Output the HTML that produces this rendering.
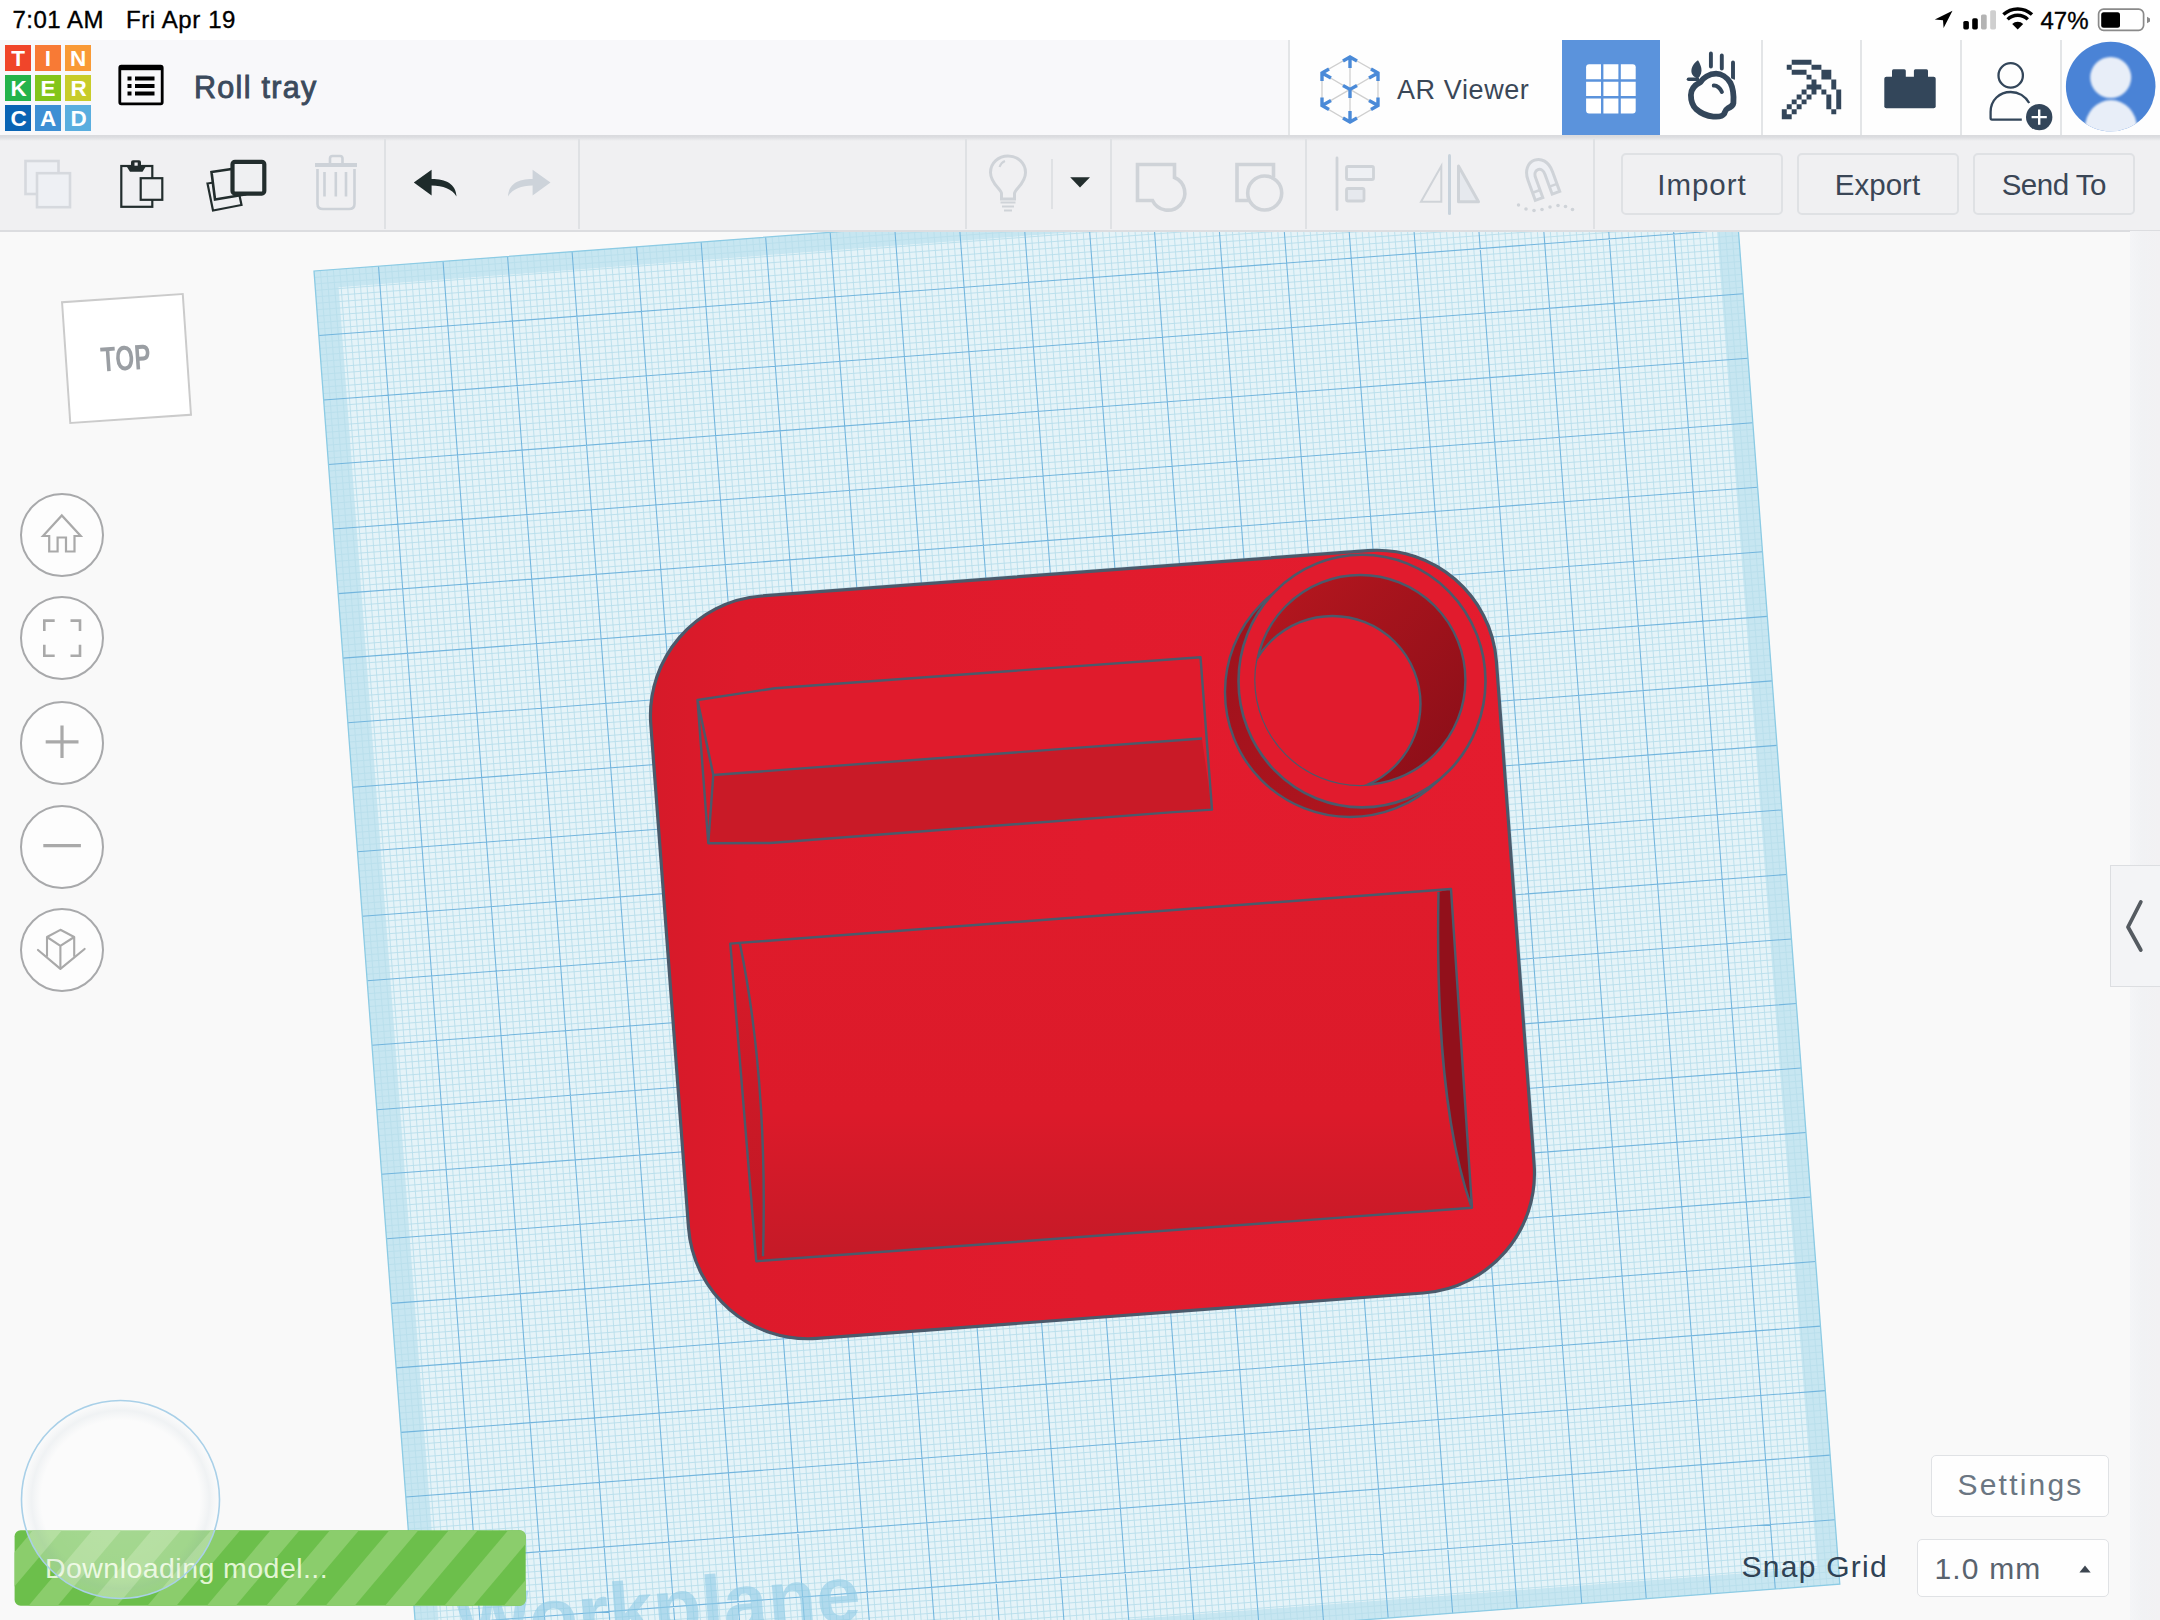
<!DOCTYPE html>
<html><head><meta charset="utf-8">
<style>
*{box-sizing:border-box}
html,body{margin:0;padding:0}
body{width:2160px;height:1620px;overflow:hidden;position:relative;background:#f9f9f9;font-family:"Liberation Sans",sans-serif;}
.abs{position:absolute}
.txt{white-space:nowrap;line-height:1}
#status{left:0;top:0;width:2160px;height:40px;background:#fff}
#header{left:0;top:40px;width:2160px;height:97px;background:#f6f7f8;border-bottom:2px solid #dcdfe2}
#toolbar{left:0;top:137px;width:2160px;height:94px;background:#eff0f2;border-bottom:2px solid #dfe1e4}
.sep{position:absolute;width:2px;background:#dcdfe2}
.btn{position:absolute;top:153px;height:62px;background:#f0f0f2;border:2px solid #dfe1e4;border-radius:5px;color:#3a4656;font-size:29.5px;text-align:center;line-height:59px;letter-spacing:0.6px;white-space:nowrap}
.circ{position:absolute;left:20px;width:84px;height:84px;border-radius:50%;border:2px solid #a8a9ab;background:#fdfdfd}
</style></head><body>
<svg class="abs" style="left:0;top:0" width="2160" height="1620" viewBox="0 0 2160 1620">
<defs>
<linearGradient id="bodyg" x1="0" y1="0" x2="1" y2="0"><stop offset="0" stop-color="#d61a29"/><stop offset="0.1" stop-color="#dd1a2b"/><stop offset="0.5" stop-color="#e11b2d"/><stop offset="1" stop-color="#e41c2e"/></linearGradient>
<linearGradient id="crescg" x1="0" y1="0" x2="1" y2="1"><stop offset="0" stop-color="#9c111c"/><stop offset="1" stop-color="#b5161f"/></linearGradient>
<linearGradient id="cupg" x1="0" y1="0" x2="1" y2="1"><stop offset="0" stop-color="#b8171f"/><stop offset="1" stop-color="#880e18"/></linearGradient>
<linearGradient id="lwg" x1="0" y1="0" x2="0" y2="1"><stop offset="0" stop-color="#d81a29"/><stop offset="1" stop-color="#bf1824"/></linearGradient>
<linearGradient id="trayg" x1="0" y1="0" x2="0" y2="1"><stop offset="0" stop-color="#df1b2b"/><stop offset="0.6" stop-color="#dc1a2a"/><stop offset="1" stop-color="#c41a27"/></linearGradient>
</defs>
<g transform="translate(314 271) rotate(-4.2827) scale(6.47032)">
<rect x="0" y="0" width="220" height="220" fill="#e5f3f8"/>
<path fill-rule="evenodd" fill="#c7e6f1" d="M0 0H220V220H0Z M3.6 2.8V217.2H216.7V2.8Z"/>
<path d="M1 0V220M0 1H220M2 0V220M0 2H220M3 0V220M0 3H220M4 0V220M0 4H220M5 0V220M0 5H220M6 0V220M0 6H220M7 0V220M0 7H220M8 0V220M0 8H220M9 0V220M0 9H220M11 0V220M0 11H220M12 0V220M0 12H220M13 0V220M0 13H220M14 0V220M0 14H220M15 0V220M0 15H220M16 0V220M0 16H220M17 0V220M0 17H220M18 0V220M0 18H220M19 0V220M0 19H220M21 0V220M0 21H220M22 0V220M0 22H220M23 0V220M0 23H220M24 0V220M0 24H220M25 0V220M0 25H220M26 0V220M0 26H220M27 0V220M0 27H220M28 0V220M0 28H220M29 0V220M0 29H220M31 0V220M0 31H220M32 0V220M0 32H220M33 0V220M0 33H220M34 0V220M0 34H220M35 0V220M0 35H220M36 0V220M0 36H220M37 0V220M0 37H220M38 0V220M0 38H220M39 0V220M0 39H220M41 0V220M0 41H220M42 0V220M0 42H220M43 0V220M0 43H220M44 0V220M0 44H220M45 0V220M0 45H220M46 0V220M0 46H220M47 0V220M0 47H220M48 0V220M0 48H220M49 0V220M0 49H220M51 0V220M0 51H220M52 0V220M0 52H220M53 0V220M0 53H220M54 0V220M0 54H220M55 0V220M0 55H220M56 0V220M0 56H220M57 0V220M0 57H220M58 0V220M0 58H220M59 0V220M0 59H220M61 0V220M0 61H220M62 0V220M0 62H220M63 0V220M0 63H220M64 0V220M0 64H220M65 0V220M0 65H220M66 0V220M0 66H220M67 0V220M0 67H220M68 0V220M0 68H220M69 0V220M0 69H220M71 0V220M0 71H220M72 0V220M0 72H220M73 0V220M0 73H220M74 0V220M0 74H220M75 0V220M0 75H220M76 0V220M0 76H220M77 0V220M0 77H220M78 0V220M0 78H220M79 0V220M0 79H220M81 0V220M0 81H220M82 0V220M0 82H220M83 0V220M0 83H220M84 0V220M0 84H220M85 0V220M0 85H220M86 0V220M0 86H220M87 0V220M0 87H220M88 0V220M0 88H220M89 0V220M0 89H220M91 0V220M0 91H220M92 0V220M0 92H220M93 0V220M0 93H220M94 0V220M0 94H220M95 0V220M0 95H220M96 0V220M0 96H220M97 0V220M0 97H220M98 0V220M0 98H220M99 0V220M0 99H220M101 0V220M0 101H220M102 0V220M0 102H220M103 0V220M0 103H220M104 0V220M0 104H220M105 0V220M0 105H220M106 0V220M0 106H220M107 0V220M0 107H220M108 0V220M0 108H220M109 0V220M0 109H220M111 0V220M0 111H220M112 0V220M0 112H220M113 0V220M0 113H220M114 0V220M0 114H220M115 0V220M0 115H220M116 0V220M0 116H220M117 0V220M0 117H220M118 0V220M0 118H220M119 0V220M0 119H220M121 0V220M0 121H220M122 0V220M0 122H220M123 0V220M0 123H220M124 0V220M0 124H220M125 0V220M0 125H220M126 0V220M0 126H220M127 0V220M0 127H220M128 0V220M0 128H220M129 0V220M0 129H220M131 0V220M0 131H220M132 0V220M0 132H220M133 0V220M0 133H220M134 0V220M0 134H220M135 0V220M0 135H220M136 0V220M0 136H220M137 0V220M0 137H220M138 0V220M0 138H220M139 0V220M0 139H220M141 0V220M0 141H220M142 0V220M0 142H220M143 0V220M0 143H220M144 0V220M0 144H220M145 0V220M0 145H220M146 0V220M0 146H220M147 0V220M0 147H220M148 0V220M0 148H220M149 0V220M0 149H220M151 0V220M0 151H220M152 0V220M0 152H220M153 0V220M0 153H220M154 0V220M0 154H220M155 0V220M0 155H220M156 0V220M0 156H220M157 0V220M0 157H220M158 0V220M0 158H220M159 0V220M0 159H220M161 0V220M0 161H220M162 0V220M0 162H220M163 0V220M0 163H220M164 0V220M0 164H220M165 0V220M0 165H220M166 0V220M0 166H220M167 0V220M0 167H220M168 0V220M0 168H220M169 0V220M0 169H220M171 0V220M0 171H220M172 0V220M0 172H220M173 0V220M0 173H220M174 0V220M0 174H220M175 0V220M0 175H220M176 0V220M0 176H220M177 0V220M0 177H220M178 0V220M0 178H220M179 0V220M0 179H220M181 0V220M0 181H220M182 0V220M0 182H220M183 0V220M0 183H220M184 0V220M0 184H220M185 0V220M0 185H220M186 0V220M0 186H220M187 0V220M0 187H220M188 0V220M0 188H220M189 0V220M0 189H220M191 0V220M0 191H220M192 0V220M0 192H220M193 0V220M0 193H220M194 0V220M0 194H220M195 0V220M0 195H220M196 0V220M0 196H220M197 0V220M0 197H220M198 0V220M0 198H220M199 0V220M0 199H220M201 0V220M0 201H220M202 0V220M0 202H220M203 0V220M0 203H220M204 0V220M0 204H220M205 0V220M0 205H220M206 0V220M0 206H220M207 0V220M0 207H220M208 0V220M0 208H220M209 0V220M0 209H220M211 0V220M0 211H220M212 0V220M0 212H220M213 0V220M0 213H220M214 0V220M0 214H220M215 0V220M0 215H220M216 0V220M0 216H220M217 0V220M0 217H220M218 0V220M0 218H220M219 0V220M0 219H220" stroke="#b9dfec" stroke-width="0.14" fill="none"/>
<path d="M10 0V220M0 10H220M20 0V220M0 20H220M30 0V220M0 30H220M40 0V220M0 40H220M50 0V220M0 50H220M60 0V220M0 60H220M70 0V220M0 70H220M80 0V220M0 80H220M90 0V220M0 90H220M100 0V220M0 100H220M110 0V220M0 110H220M120 0V220M0 120H220M130 0V220M0 130H220M140 0V220M0 140H220M150 0V220M0 150H220M160 0V220M0 160H220M170 0V220M0 170H220M180 0V220M0 180H220M190 0V220M0 190H220M200 0V220M0 200H220M210 0V220M0 210H220" stroke="#72b5dd" stroke-width="0.165" fill="none"/>
<rect x="0" y="0" width="220" height="220" fill="none" stroke="#8ccbe4" stroke-width="0.2"/>
<text x="6.25" y="214.3" font-family="Liberation Sans" font-weight="bold" font-size="12.3" fill="#8fcbe6" opacity="0.6">Workplane</text>
</g>
<path d="M761.5 596.0 L1367.8 550.6 C1433.9 545.6 1491.5 595.2 1496.4 661.3 L1534.1 1164.4 C1539.1 1230.5 1489.5 1288.1 1423.4 1293.0 L817.1 1338.4 C751.0 1343.4 693.4 1293.8 688.5 1227.7 L650.8 724.6 C645.9 658.5 695.4 600.9 761.5 596.0Z" fill="url(#bodyg)" stroke="#4b5a6b" stroke-width="3.2"/>
<path d="M697.5 700 L775 688.2 L1200.5 657.2 L1201.9 738.5 L713.3 775 Z" fill="#e01b2c"/>
<path d="M713.3 775 L1201.9 738.5 L1212 809.6 L1170 812.4 L770 843 L708.3 843.2 Z" fill="#c91a27"/>
<path d="M697.5 700 L713.3 775 L708.3 843.2 Z" fill="#d41a29"/>
<path d="M697.5 700 L775 688.2 L1200.5 657.2 L1212 809.6 L1170 812.4 L770 843 L708.3 843.2 Z M697.5 700 L713.3 775 L708.3 843.2 M713.3 775 L1201.9 738.5" fill="none" stroke="#4b5a6b" stroke-width="2.4" stroke-linejoin="round"/>
<circle cx="1350" cy="692" r="125" fill="url(#crescg)" stroke="#4b5a6b" stroke-width="2.4"/>
<ellipse cx="1362" cy="681.1" rx="123.5" ry="126.3" fill="#e11b2d" stroke="#4b5a6b" stroke-width="2.6"/>
<circle cx="1360.4" cy="680" r="105" fill="url(#cupg)" stroke="#4b5a6b" stroke-width="2.4"/>
<clipPath id="cupclip"><circle cx="1360.4" cy="680" r="105"/></clipPath>
<circle cx="1332.5" cy="704" r="88" fill="#e11b2d" stroke="#4b5a6b" stroke-width="2.4" clip-path="url(#cupclip)"/>
<path d="M730.3 943.6 L1451 889 L1472 1207.8 L756.3 1261.2 Z" fill="url(#trayg)"/>
<path d="M730.3 943.6 L740 944 Q768 1080 763 1256.3 L756.3 1261.2 Z" fill="url(#lwg)"/>
<path d="M1451 889 L1438.5 892 C1436.5 1000 1441 1120 1471 1205.6 L1472 1207.8 Z" fill="#92101b"/>
<path d="M730.3 943.6 L1451 889 L1472 1207.8 L756.3 1261.2 Z M740 944 Q768 1080 763 1256.3 M1438.5 892 C1436.5 1000 1441 1120 1471 1205.6" fill="none" stroke="#4b5a6b" stroke-width="2.4" stroke-linejoin="round"/>
</svg>

<!-- status bar -->
<div class="abs" style="left:0;top:0;width:2160px;height:40px;background:#fff"></div>
<div class="abs txt" id="t_time" style="left:12.5px;top:7.5px;font-size:24px;color:#000;-webkit-text-stroke:0.35px #000;letter-spacing:0.5px">7:01 AM</div>
<div class="abs txt" id="t_date" style="left:126px;top:7.5px;font-size:24px;color:#000;-webkit-text-stroke:0.35px #000;letter-spacing:0.6px">Fri Apr 19</div>
<svg class="abs" style="left:1930px;top:6px" width="230" height="30" viewBox="1930 6 230 30">
  <path d="M1952.5 10.8 L1934.8 19.6 L1943 20.3 L1943.6 28 Z" fill="#000"/>
  <rect x="1963.3" y="21" width="5.6" height="8.4" rx="1.6" fill="#000"/>
  <rect x="1972.2" y="18.3" width="5.6" height="11.1" rx="1.6" fill="#000"/>
  <rect x="1981" y="14.4" width="5.7" height="15" rx="1.6" fill="#b4b4b4"/>
  <rect x="1990.2" y="10.2" width="5.8" height="19.2" rx="1.6" fill="#cfcfcf"/>
  <path d="M2017.7 29.4 L2012.2 23.9 A8 8 0 0 1 2023.2 23.9 Z" fill="#000"/>
  <path d="M2007.6 19.4 A14.5 14.5 0 0 1 2027.8 19.4" stroke="#000" stroke-width="3.4" fill="none"/>
  <path d="M2003.4 14.6 A21 21 0 0 1 2032 14.6" stroke="#000" stroke-width="3.4" fill="none"/>
  <rect x="2098.6" y="9.1" width="45" height="21.2" rx="5" fill="none" stroke="#8a8a8a" stroke-width="1.7"/>
  <rect x="2101.2" y="12.2" width="18.8" height="15.6" rx="2.5" fill="#000"/>
  <path d="M2147 16.7 L2150 18.5 L2150 21.5 L2147 23.3 Z" fill="#8a8a8a"/>
</svg>
<div class="abs txt" id="t_bat" style="left:2040.5px;top:8.5px;font-size:24px;color:#000;-webkit-text-stroke:0.35px #000">47%</div>

<!-- header -->
<div class="abs" style="left:0;top:40px;width:1290px;height:96px;background:#f8f8fa"></div>
<div class="abs" style="left:1290px;top:40px;width:870px;height:96px;background:#fefefe"></div>
<div class="abs" style="left:1288px;top:40px;width:2px;height:96px;background:#e3e5e7"></div>

<svg class="abs" style="left:0;top:40px" width="100" height="96" viewBox="0 40 100 96">
  <rect x="5" y="45" width="26" height="26" fill="#f0452a"/>
  <rect x="35" y="45" width="26" height="26" fill="#f87a35"/>
  <rect x="65" y="45" width="26" height="26" fill="#f99a36"/>
  <rect x="5" y="75" width="26" height="26" fill="#24b34b"/>
  <rect x="35" y="75" width="26" height="26" fill="#83c51a"/>
  <rect x="65" y="75" width="26" height="26" fill="#c8cc2a"/>
  <rect x="5" y="105" width="26" height="26" fill="#0a64b4"/>
  <rect x="35" y="105" width="26" height="26" fill="#3d8fd4"/>
  <rect x="65" y="105" width="26" height="26" fill="#5aaedf"/>
  <g font-family="Liberation Sans" font-weight="bold" font-size="22.5" fill="#fff" text-anchor="middle">
    <text x="18" y="66.2">T</text><text x="48" y="66.2">I</text><text x="78" y="66.2">N</text>
    <text x="18.5" y="96.2">K</text><text x="48" y="96.2">E</text><text x="78.5" y="96.2">R</text>
    <text x="18.5" y="126.2">C</text><text x="48" y="126.2">A</text><text x="78.5" y="126.2">D</text>
  </g>
</svg>
<svg class="abs" style="left:110px;top:55px" width="60" height="60" viewBox="110 55 60 60">
  <rect x="119.8" y="66.2" width="42.4" height="37.6" rx="1.5" fill="none" stroke="#000" stroke-width="2.8"/>
  <rect x="119.8" y="66.2" width="42.4" height="4" fill="#000"/>
  <rect x="127.5" y="76.5" width="4" height="4" fill="#000"/>
  <rect x="127.5" y="84" width="4" height="4" fill="#000"/>
  <rect x="127.5" y="91.5" width="4" height="4" fill="#000"/>
  <rect x="135" y="76.5" width="19.5" height="4" fill="#000"/>
  <rect x="135" y="84" width="19.5" height="4" fill="#000"/>
  <rect x="135" y="91.5" width="19.5" height="4" fill="#000"/>
</svg>
<div class="abs txt" id="t_title" style="left:194px;top:72px;font-size:30.5px;color:#3b4a5c;-webkit-text-stroke:0.9px #3b4a5c;letter-spacing:1.3px">Roll tray</div>

<!-- AR viewer -->
<svg class="abs" style="left:1315px;top:50px" width="70" height="80" viewBox="1315 50 70 80">
  <g stroke="#cfcfcf" stroke-width="1.3" fill="none">
    <path d="M1350 57 L1378 73 L1378 105.6 L1350 122 L1322 105.6 L1322 73 Z"/>
    <path d="M1350 89.4 L1350 57 M1350 89.4 L1378 105.6 M1350 89.4 L1322 105.6 M1350 89.4 L1322 73 M1350 89.4 L1378 73 M1350 89.4 L1350 122"/>
  </g>
  <g stroke="#4a8ad8" stroke-width="3.4" fill="none" stroke-linecap="butt" stroke-linejoin="miter">
    <path d="M1343 61 L1350 57 L1357 61 M1350 57 L1350 68"/>
    <path d="M1343 118 L1350 122 L1357 118 M1350 122 L1350 111"/>
    <path d="M1322 81 L1322 73 L1329 69 M1322 73 L1331 78"/>
    <path d="M1378 81 L1378 73 L1371 69 M1378 73 L1369 78"/>
    <path d="M1322 97.6 L1322 105.6 L1329 109.6 M1322 105.6 L1331 100.6"/>
    <path d="M1378 97.6 L1378 105.6 L1371 109.6 M1378 105.6 L1369 100.6"/>
    <path d="M1343 85.4 L1350 89.4 L1357 85.4 M1350 89.4 L1350 98"/>
  </g>
</svg>
<div class="abs txt" id="t_ar" style="left:1397px;top:76.5px;font-size:27px;color:#3a4757;letter-spacing:0.6px">AR Viewer</div>

<!-- blue grid button -->
<div class="abs" style="left:1562px;top:40px;width:98px;height:96px;background:#5b93dc"></div>
<svg class="abs" style="left:1580px;top:58px" width="62" height="62" viewBox="1580 58 62 62">
  <rect x="1586.1" y="64.3" width="49.6" height="49.3" rx="3" fill="#fff"/>
  <path d="M1602.2 64 V114 M1619.6 64 V114 M1586 80.5 H1636 M1586 97.2 H1636" stroke="#5b93dc" stroke-width="2.4"/>
</svg>
<div class="abs" style="left:1760.5px;top:40px;width:2px;height:96px;background:#e3e5e7"></div>
<div class="abs" style="left:1860px;top:40px;width:2px;height:96px;background:#e3e5e7"></div>
<div class="abs" style="left:1960px;top:40px;width:2px;height:96px;background:#e3e5e7"></div>
<div class="abs" style="left:2060px;top:40px;width:2px;height:96px;background:#e3e5e7"></div>

<!-- apple icon -->
<svg class="abs" style="left:1680px;top:48px" width="66" height="78" viewBox="1680 48 66 78">
  <g fill="none" stroke="#33465a" stroke-linecap="round" stroke-linejoin="round">
    <path d="M1710.9 53.5 V66.5 M1721.8 55.5 V68.5 M1733 62.5 V79" stroke-width="3.9"/>
  </g>
  <path d="M1706.5 69.5 L1738 83" stroke="#fff" stroke-width="3"/>
  <g fill="none" stroke="#33465a" stroke-linecap="round" stroke-linejoin="round">
    <path d="M1700.4 82.2 C1703 78 1709 73.7 1716.1 73.7 C1721 73.7 1727 77 1730.5 83 C1733 88 1733.9 95 1733.4 103 C1733 106 1730 107.5 1727.5 108.5 C1725.5 109.5 1725 112 1724.2 113.8 C1722.5 116.5 1718 117 1713.3 116.6 C1707 116 1701 113.5 1696 109 C1692.5 105.5 1690.9 100 1690.9 95 C1690.9 90 1694 85.5 1700.4 82.2 Z" stroke-width="5.8"/>
    <path d="M1713.8 85.6 C1717 85.4 1720.5 88.5 1721.9 92" stroke-width="4"/>
    <path d="M1688.5 79.3 H1697.5" stroke-width="3.6"/>
  </g>
  <path d="M1698 60.2 C1694 63 1691.2 67 1691.4 71.5 C1691.6 75 1694.5 77.6 1698 78.6 C1701 75.5 1702 71.5 1701.3 68 C1700.8 65 1699.5 62.5 1698 60.2 Z" fill="#33465a"/>
</svg>
<!-- pickaxe -->
<svg class="abs" style="left:1778px;top:56px" width="66" height="66" viewBox="1778 56 66 66">
<path fill="#33465a" d="M1791.70 59.80h4.95v4.95h-4.95zM1796.65 59.80h4.95v4.95h-4.95zM1801.60 59.80h4.95v4.95h-4.95zM1806.55 59.80h4.95v4.95h-4.95zM1786.75 64.75h4.95v4.95h-4.95zM1811.50 64.75h4.95v4.95h-4.95zM1816.45 64.75h4.95v4.95h-4.95zM1791.70 69.70h4.95v4.95h-4.95zM1796.65 69.70h4.95v4.95h-4.95zM1801.60 69.70h4.95v4.95h-4.95zM1821.40 69.70h4.95v4.95h-4.95zM1826.35 69.70h4.95v4.95h-4.95zM1806.55 74.65h4.95v4.95h-4.95zM1821.40 74.65h4.95v4.95h-4.95zM1826.35 74.65h4.95v4.95h-4.95zM1811.50 79.60h4.95v4.95h-4.95zM1831.30 79.60h4.95v4.95h-4.95zM1806.55 84.55h4.95v4.95h-4.95zM1811.50 84.55h4.95v4.95h-4.95zM1816.45 84.55h4.95v4.95h-4.95zM1831.30 84.55h4.95v4.95h-4.95zM1801.60 89.50h4.95v4.95h-4.95zM1811.50 89.50h4.95v4.95h-4.95zM1821.40 89.50h4.95v4.95h-4.95zM1836.25 89.50h4.95v4.95h-4.95zM1796.65 94.45h4.95v4.95h-4.95zM1806.55 94.45h4.95v4.95h-4.95zM1826.35 94.45h4.95v4.95h-4.95zM1836.25 94.45h4.95v4.95h-4.95zM1791.70 99.40h4.95v4.95h-4.95zM1801.60 99.40h4.95v4.95h-4.95zM1826.35 99.40h4.95v4.95h-4.95zM1836.25 99.40h4.95v4.95h-4.95zM1786.75 104.35h4.95v4.95h-4.95zM1796.65 104.35h4.95v4.95h-4.95zM1826.35 104.35h4.95v4.95h-4.95zM1836.25 104.35h4.95v4.95h-4.95zM1781.80 109.30h4.95v4.95h-4.95zM1791.70 109.30h4.95v4.95h-4.95zM1831.30 109.30h4.95v4.95h-4.95zM1781.80 114.25h4.95v4.95h-4.95zM1786.75 114.25h4.95v4.95h-4.95z"/></svg>
<!-- brick -->
<svg class="abs" style="left:1880px;top:66px" width="60" height="46" viewBox="1880 66 60 46">
  <rect x="1892" y="69.2" width="13.8" height="10" rx="1.5" fill="#33465a"/>
  <rect x="1913.9" y="69.2" width="14.1" height="10" rx="1.5" fill="#33465a"/>
  <rect x="1884.3" y="76.8" width="51.4" height="31.5" rx="2" fill="#33465a"/>
</svg>

<!-- user add -->
<svg class="abs" style="left:1985px;top:56px" width="72" height="80" viewBox="1985 56 72 80">
  <circle cx="2010.7" cy="75.4" r="12.2" fill="none" stroke="#33465a" stroke-width="2.3"/>
  <path d="M2021.8 119.6 H1992 C1991 119.6 1990.6 119 1990.6 118 V112 C1990.6 100 1999.5 92 2010.7 92 C2018.5 92 2025.5 96.5 2029.2 103" fill="none" stroke="#33465a" stroke-width="2.3"/>
  <circle cx="2039.2" cy="117.1" r="13.2" fill="#33465a"/>
  <path d="M2039.2 109.5 V124.7 M2031.6 117.1 H2046.8" stroke="#fff" stroke-width="2.4"/>
</svg>

<!-- avatar -->
<svg class="abs" style="left:2062px;top:40px" width="98" height="96" viewBox="2062 40 98 96">
  <defs>
    <clipPath id="avc"><circle cx="2110.7" cy="86.5" r="44.8"/></clipPath>
    <filter id="blr" x="-20%" y="-20%" width="140%" height="140%"><feGaussianBlur stdDeviation="1.2"/></filter>
  </defs>
  <circle cx="2110.7" cy="86.5" r="44.8" fill="#4a83d6"/>
  <g clip-path="url(#avc)" filter="url(#blr)">
    <circle cx="2110.7" cy="77.5" r="20.5" fill="#e8eef8"/>
    <ellipse cx="2111" cy="128" rx="26" ry="28" fill="#e8eef8"/>
  </g>
</svg>

<!-- toolbar -->
<div class="abs" style="left:0;top:136px;width:2160px;height:95px;background:#f0f0f2"></div>
<div class="abs" style="left:0;top:135px;width:2160px;height:6px;background:linear-gradient(#d9dadd,#dcdde0 35%,#f0f0f2)"></div>
<div class="abs" style="left:0;top:230px;width:2160px;height:2px;background:#dcdde0"></div>
<div class="abs" style="left:384px;top:139px;width:2px;height:90px;background:#dfe1e4"></div>
<div class="abs" style="left:577.5px;top:139px;width:2px;height:90px;background:#dfe1e4"></div>
<div class="abs" style="left:964.5px;top:139px;width:2px;height:90px;background:#dfe1e4"></div>
<div class="abs" style="left:1110px;top:139px;width:2px;height:90px;background:#dfe1e4"></div>
<div class="abs" style="left:1304.7px;top:139px;width:2px;height:90px;background:#dfe1e4"></div>
<div class="abs" style="left:1593px;top:139px;width:2px;height:90px;background:#dfe1e4"></div>
<div class="abs" style="left:1051px;top:159px;width:2px;height:50px;background:#dfe1e4"></div>

<svg class="abs" style="left:0;top:138px" width="1620" height="92" viewBox="0 138 1620 92">
  <!-- copy (disabled) -->
  <rect x="25.5" y="161" width="33" height="33" fill="#eef0f4" stroke="#d6d9de" stroke-width="2.6"/>
  <rect x="37" y="173.2" width="33" height="34" fill="#eef0f4" stroke="#d6d9de" stroke-width="2.6"/>
  <!-- paste -->
  <g fill="none" stroke="#222d2d" stroke-width="2.2">
    <rect x="121.3" y="166" width="31" height="40.8"/>
  </g>
  <path d="M126.7 166.5 L130 171.7 H142.5 L145.8 166.5 Z" fill="#222d2d"/>
  <rect x="131" y="160.3" width="10" height="8" rx="2" fill="#222d2d"/>
  <rect x="134.5" y="162.5" width="3.2" height="3.2" fill="#eff0f2"/>
  <rect x="140.7" y="178.2" width="21.6" height="21.6" fill="#eff0f2" stroke="#222d2d" stroke-width="2.2"/>
  <!-- duplicate -->
  <g fill="#eff0f2" stroke="#222d2d" stroke-width="2.2">
    <path d="M207.5 183.5 L236 179 L241.5 205 L213 210.5 Z"/>
    <path d="M211.5 172 L242 167.5 L245 194.5 L215 199.5 Z" stroke-width="2.6"/>
  </g>
  <rect x="232.5" y="161.8" width="31.8" height="31.8" rx="2.5" fill="#eff0f2" stroke="#222d2d" stroke-width="4.2"/>
  <!-- trash (disabled) -->
  <g fill="none" stroke="#cdd2d8" stroke-width="2.6">
    <path d="M317.5 169 V204 C317.5 207.5 319.5 209 323 209 H349 C352.5 209 354.5 207.5 354.5 204 V169"/>
    <path d="M330 163 V158.5 C330 156.8 331 156 332.5 156 H340 C341.5 156 342.5 156.8 342.5 158.5 V163"/>
    <path d="M324.5 172 V196.5 M335.8 172 V196.5 M346 172 V196.5"/>
  </g>
  <rect x="315" y="163" width="42" height="4" fill="#cdd2d8"/>
  <!-- undo -->
  <path d="M413.8 182.4 L431.6 169.8 V179 C446 179 456 184 456.5 196.5 C452 189 443 185.5 431.6 185.5 V195.5 Z" fill="#1e2b2b"/>
  <!-- redo -->
  <path d="M550.5 182.4 L532.6 169.8 V179 C518 179 508.5 184 508 196.5 C512.5 189 521.5 185.5 532.6 185.5 V195.5 Z" fill="#cdd3da"/>
  <!-- bulb -->
  <g fill="none" stroke="#cfd3d8" stroke-width="3">
    <path d="M1001.5 199 V193.5 C1001.5 189 990.5 184 990.5 172.5 C990.5 163 998.5 156 1008 156 C1017.5 156 1025.5 163 1025.5 172.5 C1025.5 184 1014.5 189 1014.5 193.5 V199 Z"/>
    <path d="M999.5 167 C1000.5 164 1002.5 162 1005 161" stroke-width="2"/>
  </g>
  <path d="M1000.5 202.5 H1015.5 M1002 206.5 H1014 M1004 210.5 H1012" stroke="#cfd3d8" stroke-width="2.2"/>
  <path d="M1070.2 177.3 H1090 L1080 187.6 Z" fill="#222d2d"/>
  <!-- group -->
  <path d="M1137.5 164.5 H1174.5 V177.5 A17 17 0 1 1 1152.5 200.5 H1137.5 Z" fill="none" stroke="#cfd3d8" stroke-width="3.6"/>
  <!-- ungroup -->
  <path d="M1248.5 200.5 H1237 V164.5 H1273.5 V177" fill="none" stroke="#cfd3d8" stroke-width="3.6"/>
  <circle cx="1264.7" cy="193" r="17" fill="none" stroke="#cfd3d8" stroke-width="3.6"/>
  <!-- align -->
  <path d="M1337 158 V209.6" stroke="#cfd3d8" stroke-width="2.8" stroke-linecap="round"/>
  <rect x="1346.5" y="166.5" width="27" height="13" rx="1.5" fill="#eef0f4" stroke="#cfd3d8" stroke-width="2.8"/>
  <rect x="1346.5" y="188.5" width="17.5" height="12.5" rx="1.5" fill="#e6e9ee" stroke="#cfd3d8" stroke-width="2.8"/>
  <!-- mirror -->
  <path d="M1449.5 155.5 V213.5" stroke="#c9d3dc" stroke-width="3" stroke-linecap="round"/>
  <path d="M1441.3 166 V201.7 H1421 Z" fill="none" stroke="#cfd3d8" stroke-width="2"/>
  <path d="M1458.5 166 V201.7 H1478.5 Z" fill="#e6e9ee" stroke="#cfd3d8" stroke-width="3" stroke-linejoin="round"/>
  <!-- magnet -->
  <g transform="rotate(-20 1541 178)">
    <path d="M1528 197 V176 C1528 165 1534 159 1541 159 C1548 159 1554 165 1554 176 V197 H1546 V176 C1546 172 1544 169 1541 169 C1538 169 1536 172 1536 176 V197 Z" fill="#eef0f4" stroke="#cfd3d8" stroke-width="3"/>
    <path d="M1528 189 H1536 M1546 189 H1554" stroke="#cfd3d8" stroke-width="2.5"/>
  </g>
  <g fill="#cfd3d8">
    <circle cx="1518.5" cy="205" r="1.7"/><circle cx="1526" cy="209" r="1.8"/><circle cx="1534" cy="210.5" r="1.8"/>
    <circle cx="1542" cy="209.5" r="1.8"/><circle cx="1550" cy="207" r="1.8"/><circle cx="1558" cy="205.5" r="1.8"/>
    <circle cx="1565.5" cy="206.5" r="1.8"/><circle cx="1572.5" cy="209.5" r="1.8"/>
  </g>
</svg>
<div class="abs btn" id="b_imp" style="left:1621px;width:162px;letter-spacing:1px">Import</div>
<div class="abs btn" id="b_exp" style="left:1796.5px;width:162px;letter-spacing:0px">Export</div>
<div class="abs btn" id="b_send" style="left:1972.5px;width:162.5px;letter-spacing:-0.5px">Send To</div>

<!-- right strip + collapse tab -->
<div class="abs" style="left:2130px;top:231px;width:30px;height:1389px;background:linear-gradient(90deg,#f4f5f7,#f1f2f4 40%,#f2f1f3)"></div>
<div class="abs" style="left:2110px;top:864.5px;width:52px;height:122.5px;background:#f3f4f6;border:1.5px solid #dcdee1;border-right:none"></div>
<svg class="abs" style="left:2115px;top:890px" width="40" height="70" viewBox="2115 890 40 70">
  <path d="M2140.8 902 L2128 927 L2140.8 950" fill="none" stroke="#555b61" stroke-width="3.8" stroke-linecap="round" stroke-linejoin="round"/>
</svg>

<!-- left: TOP cube -->
<div class="abs" style="left:64.5px;top:296.5px;width:122.6px;height:122.6px;background:#fff;border:2px solid #cbcbcb;transform:rotate(-3.9deg)">
  <div class="abs txt" style="left:0;top:0;width:118px;height:118px;line-height:118px;text-align:center;font-weight:bold;font-size:35px;color:#9a9ea3"><span style="display:inline-block;transform:scaleX(0.7)">TOP</span></div>
</div>

<!-- view buttons -->
<div class="circ" style="top:492.5px"></div>
<div class="circ" style="top:596px"></div>
<div class="circ" style="top:700.5px"></div>
<div class="circ" style="top:804.5px"></div>
<div class="circ" style="top:908px"></div>
<svg class="abs" style="left:20px;top:490px" width="86" height="490" viewBox="20 490 86 490">
  <g fill="none" stroke="#a9a9a9" stroke-width="2.2" stroke-linejoin="miter">
    <path d="M43 536 L61.8 515.5 L80.7 536 H74.5 V551.5 H66 V537.5 H57.6 V551.5 H49.2 V536 Z"/>
    <path d="M44.3 631 V620.6 H54.7 M70.5 620.6 H80 V631 M44.3 644.8 V655.7 H54.7 M70.5 655.7 H80 V644.8" stroke-width="2.6"/>
    <path d="M45.7 741.8 H78.5 M62 725.5 V758" stroke-width="3.2"/>
    <path d="M43.3 845.7 H80.9" stroke-width="3.2"/>
    <path d="M47 956.7 V937 L60.4 929.8 L74.2 937 V956.7 M47 937 L60.4 945.8 L74.2 937 M60.4 945.8 V968" stroke-width="2.1" stroke-linejoin="round"/>
    <path d="M38 950 L60.4 968.8 L84.6 949" stroke-width="2.2" stroke-linejoin="round" stroke-linecap="round"/>
  </g>
</svg>

<!-- downloading bar -->
<svg class="abs" style="left:14px;top:1529px" width="513" height="78" viewBox="14 1529 513 78">
  <defs><clipPath id="dlc"><rect x="14.6" y="1530.2" width="511.1" height="75.6" rx="6"/></clipPath></defs>
  <g clip-path="url(#dlc)"><rect x="14" y="1529" width="513" height="78" fill="#6cbf4b"/><g fill="#8bcd6c"><polygon points="-21.98,1525 7.02,1525 -66.50,1612 -95.50,1612"/><polygon points="37.42,1525 66.42,1525 -7.09,1612 -36.09,1612"/><polygon points="96.82,1525 125.82,1525 52.31,1612 23.31,1612"/><polygon points="156.22,1525 185.22,1525 111.71,1612 82.71,1612"/><polygon points="215.62,1525 244.62,1525 171.11,1612 142.11,1612"/><polygon points="275.02,1525 304.02,1525 230.50,1612 201.50,1612"/><polygon points="334.42,1525 363.42,1525 289.91,1612 260.91,1612"/><polygon points="393.82,1525 422.82,1525 349.31,1612 320.31,1612"/><polygon points="453.22,1525 482.22,1525 408.70,1612 379.70,1612"/><polygon points="512.62,1525 541.62,1525 468.10,1612 439.11,1612"/><polygon points="572.02,1525 601.02,1525 527.51,1612 498.51,1612"/></g></g>
</svg>
<div class="abs txt" id="t_dl" style="left:45px;top:1553.5px;font-size:28.5px;color:rgba(248,255,236,0.86);letter-spacing:0.45px">Downloading model...</div>
<svg class="abs" style="left:15px;top:1395px" width="212" height="212" viewBox="15 1395 212 212">
  <defs><radialGradient id="bub" cx="0.5" cy="0.5" r="0.5"><stop offset="0" stop-color="#ffffff" stop-opacity="0.4"/><stop offset="0.8" stop-color="#ffffff" stop-opacity="0.36"/><stop offset="0.9" stop-color="#e2e8ec" stop-opacity="0.4"/><stop offset="1" stop-color="#ffffff" stop-opacity="0.3"/></radialGradient></defs>
  <circle cx="120.5" cy="1499.5" r="99" fill="url(#bub)" stroke="#a9d0e8" stroke-width="1.6"/>
</svg>

<!-- bottom right -->
<div class="abs" style="left:1931px;top:1455px;width:178.3px;height:61.6px;background:#fefefe;border:1.6px solid #e0e2e5;border-radius:5px"></div>
<div class="abs txt" id="t_set" style="left:1957.5px;top:1470.3px;font-size:30px;color:#6b7682;letter-spacing:2.2px">Settings</div>
<div class="abs txt" id="t_snap" style="left:1741.5px;top:1552px;font-size:30px;color:#2f4254;letter-spacing:1.25px">Snap Grid</div>
<div class="abs" style="left:1917px;top:1539px;width:192.3px;height:58.3px;background:#fefefe;border:1.6px solid #e0e2e5;border-radius:5px"></div>
<div class="abs txt" id="t_mm" style="left:1934.5px;top:1554px;font-size:30px;color:#59636e;letter-spacing:1.15px">1.0 mm</div>
<svg class="abs" style="left:2075px;top:1560px" width="20" height="16" viewBox="2075 1560 20 16"><path d="M2079.4 1572.4 L2085 1565.4 L2090.7 1572.4 Z" fill="#3d4650"/></svg>

</body></html>
